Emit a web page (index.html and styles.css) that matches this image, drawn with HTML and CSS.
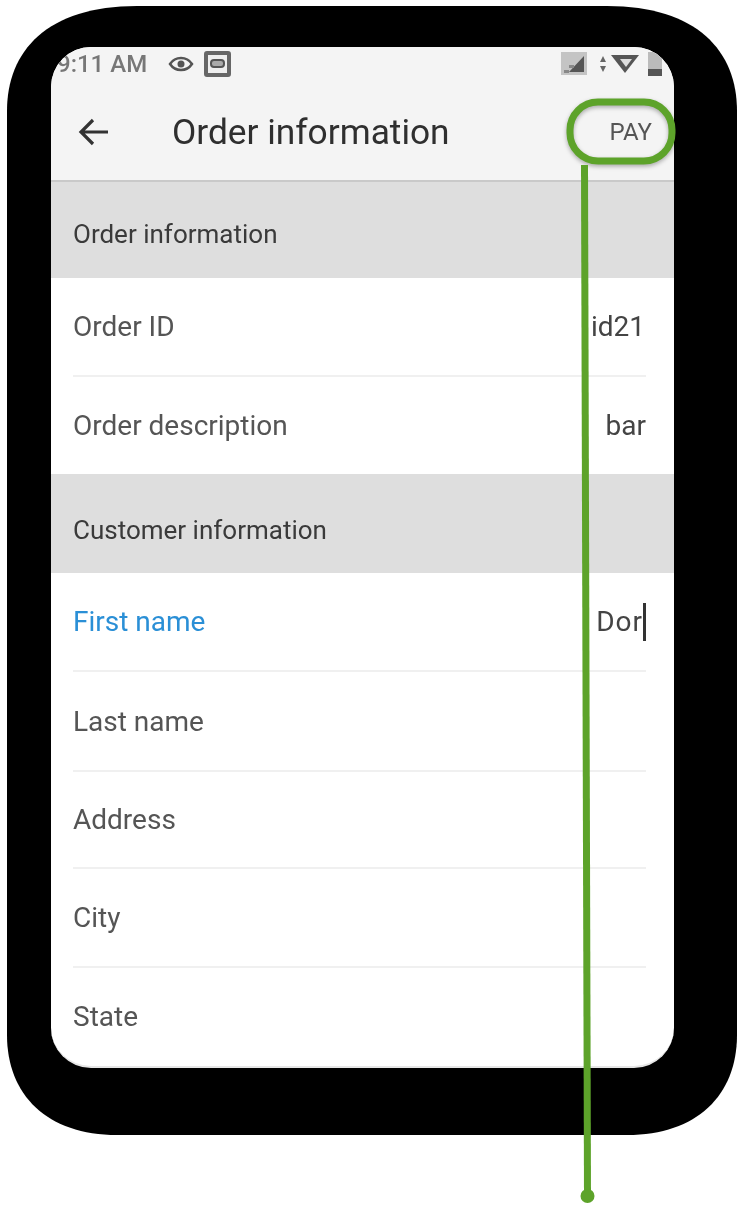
FILE: index.html
```html
<!DOCTYPE html>
<html lang="en">
<head>
<meta charset="utf-8">
<title>Order information</title>
<link rel="stylesheet" href="styles.css">
</head>
<body>
<div class="phone">
  <div class="screen">
    <div class="appbar">
      <div class="status">
        <span class="time">9:11 AM</span>
        <svg class="st-eye" width="26" height="18" viewBox="0 0 26 18"><path d="M2 9c3-4.500 7-6 11-6s8 1.500 11 6c-3 4.500-7 6-11 6S5 13.500 2 9z" fill="none" stroke="#555" stroke-width="2.500"/><circle cx="13" cy="9" r="3.500" fill="#555"/></svg>
        <svg class="st-box" width="27" height="26" viewBox="0 0 27 26"><rect x="2" y="2" width="23" height="22" rx="1" fill="#eee" stroke="#666" stroke-width="4"/><rect x="7" y="9" width="13" height="7" rx="3" fill="#aaa" stroke="#555" stroke-width="2"/></svg>
        <span class="st-spacer"></span>
        <svg class="st-sim" width="26" height="23" viewBox="0 0 26 23"><rect width="26" height="23" fill="#c4c4c4"/><path d="M8 20 23 4v16z" fill="#555"/><path d="M3 18h5v3H3zM8 13h5v3H8z" fill="#888"/></svg>
        <svg class="st-arrows" width="10" height="18" viewBox="0 0 10 18"><path d="M5 1 8 7H2zM5 17 2 11h6z" fill="#666"/></svg>
        <svg class="st-wifi" width="30" height="21" viewBox="0 0 30 21"><path d="M1 2h28L15 20z" fill="#555"/><path d="M10 6h12l-6 8z" fill="#ddd"/></svg>
        <svg class="st-batt" width="14" height="24" viewBox="0 0 14 24"><rect width="14" height="24" fill="#bbb"/><rect y="17" width="14" height="7" fill="#555"/></svg>
      </div>
      <div class="toolbar">
        <svg class="back" width="32" height="32" viewBox="0 0 32 32"><path d="M30 16H4M15 4 3 16l12 12" fill="none" stroke="#333" stroke-width="3.200"/></svg>
        <span class="title">Order information</span>
        <span class="pay">PAY</span>
      </div>
    </div>

    <div class="section">Order information</div>
    <div class="row line"><span>Order ID</span><span class="value value-id">id21</span></div>
    <div class="row row-short"><span>Order description</span><span class="value">bar</span></div>

    <div class="section section-tall">Customer information</div>
    <div class="row line"><span class="label-active">First name</span><span class="value caret">Dor</span></div>
    <div class="row row-tall line"><span>Last name</span></div>
    <div class="row row-short line"><span>Address</span></div>
    <div class="row line"><span>City</span></div>
    <div class="row last"><span>State</span></div>
  </div>
</div>
<svg class="callout" width="742" height="1215" viewBox="0 0 742 1215">
  <rect class="ring" x="570" y="102" width="102" height="59" rx="28" fill="none" stroke="#5da32a" stroke-width="7"/>
  <path d="M584.500 165 587.500 1195" fill="none" stroke="#5da32a" stroke-width="7"/>
  <circle cx="587.500" cy="1196" r="7" fill="#5da32a"/>
</svg>
</body>
</html>
```

FILE: styles.css
```css
* { box-sizing: border-box; }
html, body { margin: 0; padding: 0; background: #fff; }
body { width: 742px; height: 1215px; position: relative; overflow: hidden; font-family: Roboto, "Liberation Sans", sans-serif; }

.phone {
  margin: 6px 0 0 7px;
  width: 730px;
  height: 1129px;
  background: #000;
  clip-path: path("M0 105C0 45 40 0 130 0H600C690 0 730 45 730 105V1029C730 1089 690 1129 620 1129H110C40 1129 0 1089 0 1029Z");
  padding: 41px 63px 67px 44px;
}
.screen {
  width: 623px;
  height: 1021px;
  background: #fff;
  border-radius: 40px;
  overflow: hidden;
  border-bottom: 2px solid #e6e6e6;
  filter: blur(0.6px);
}

.appbar { height: 135px; background: #f4f4f4; border-bottom: 2px solid #c9c9c9; }
.status { height: 33px; display: flex; align-items: center; padding: 0 0 0 6px; color: #666; }
.time { font-size: 24px; font-weight: 500; color: #777; width: 111px; white-space: nowrap; }
.st-eye { margin-right: 10px; }
.st-spacer { flex: 1; }
.st-sim { margin-right: 11px; }
.st-arrows { margin-right: 2px; }
.st-wifi { margin-right: 8px; }
.st-batt { margin-right: 12px; }

.toolbar { height: 100px; display: flex; align-items: center; padding: 4px 22px 0 27px; }
.back { flex: none; }
.title { margin-left: 62px; font-size: 35.300px; color: #2f2f2f; flex: 1; white-space: nowrap; }
.pay { font-size: 24px; color: #555; }

.section {
  height: 96px;
  background: #dedede;
  display: flex;
  align-items: center;
  padding: 8px 22px 0;
  font-size: 26px;
  color: #3a3a3a;
}
.section-tall { height: 99px; padding-top: 12px; }
.row {
  height: 99px;
  margin: 0 28px 0 22px;
  display: flex;
  align-items: center;
  justify-content: space-between;
  font-size: 28px;
  color: #555;
}
.row-short { height: 97px; }
.row-tall { height: 100px; }
.line { border-bottom: 2px solid #f0f0f0; }
.value { color: #444; }
.value-id { margin-right: 1px; }
.label-active { color: #2a8fd6; }
.caret { border-right: 3px solid #333; line-height: 38px; letter-spacing: 1px; }
.last { height: 100px; padding-bottom: 4px; }

.callout { position: absolute; left: 0; top: 0; pointer-events: none; }
.ring { filter: drop-shadow(0 2px 2px rgba(0, 0, 0, 0.3)); }
```
